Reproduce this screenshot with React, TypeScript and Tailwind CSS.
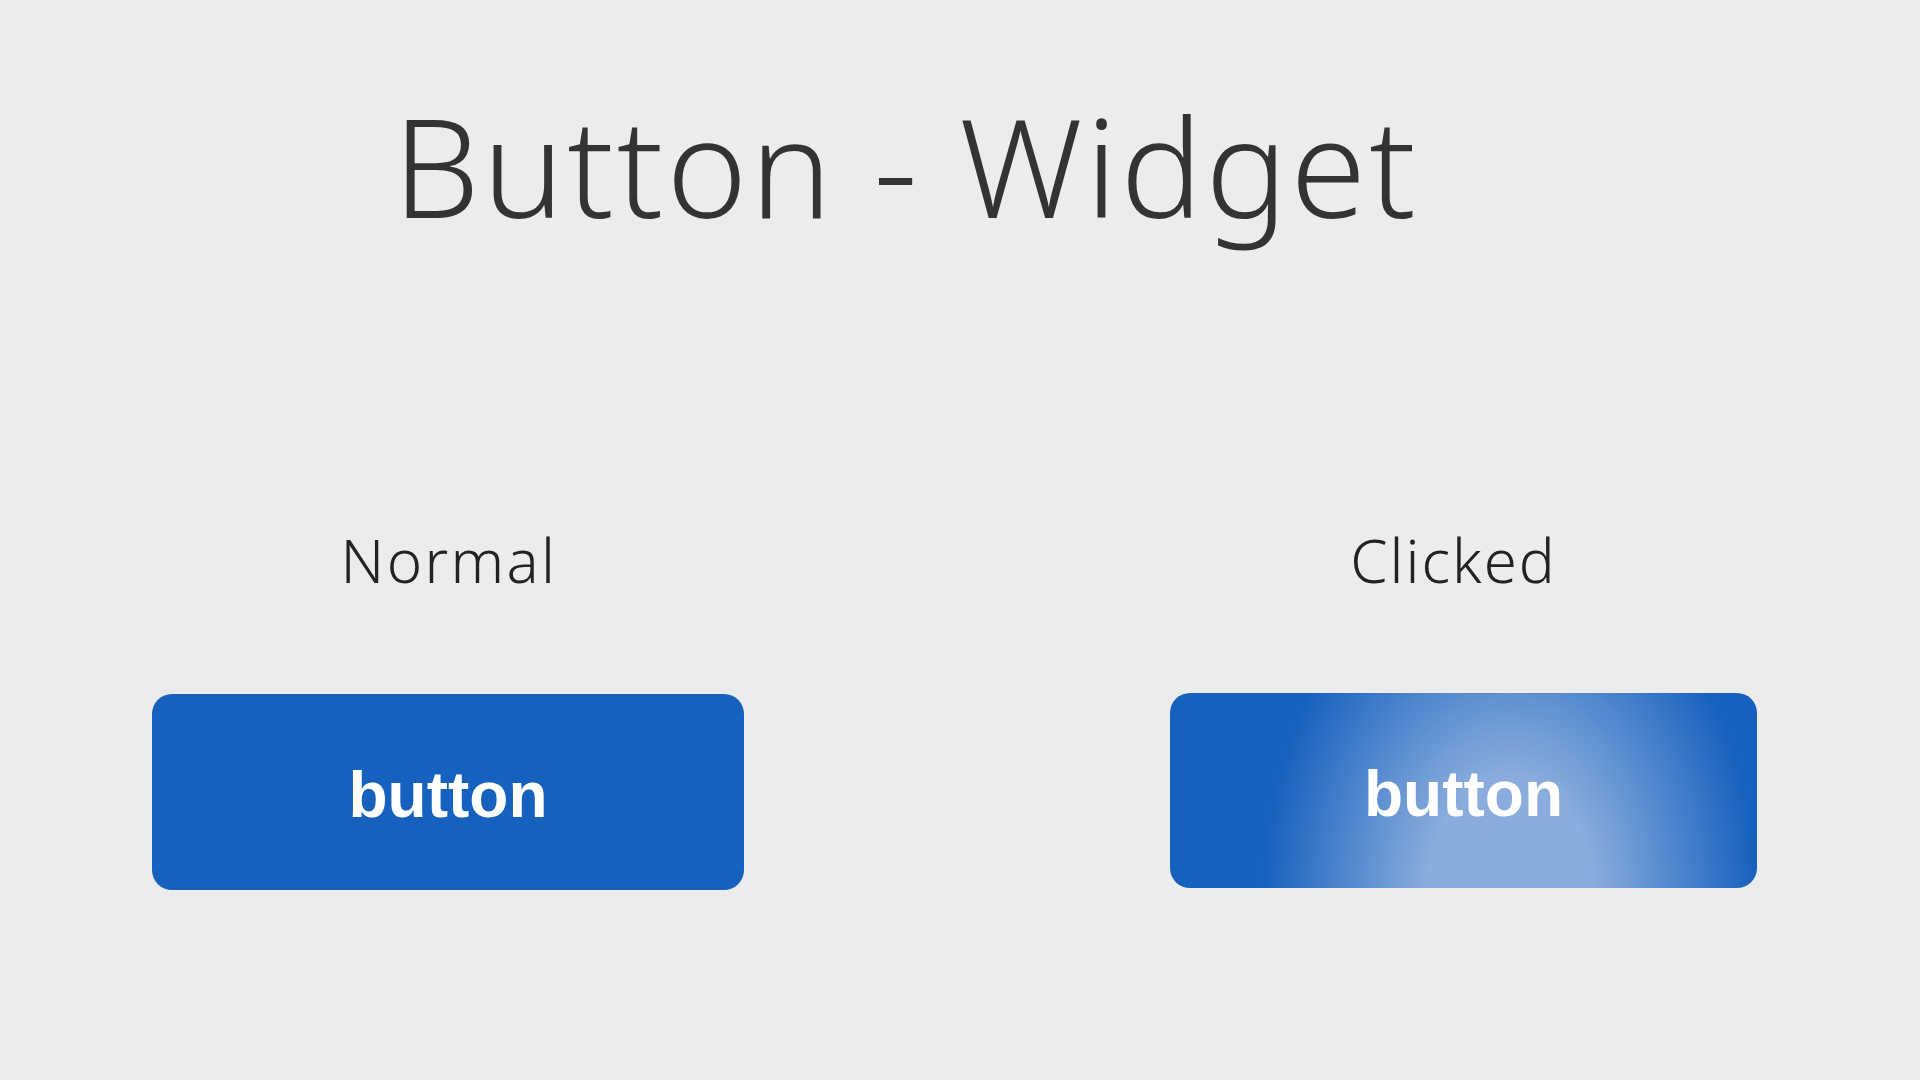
export default function App() {
  return (
    <div className="w-[1920px] h-[1080px] bg-[#ececec] flex flex-col overflow-hidden" style={{ fontFamily: '"Noto Sans", Lato, sans-serif' }}>
      <div className="pt-[97px] pl-[393px]">
        <h1 className="text-[137px] leading-none font-light text-[#333333] tracking-[3px]">
          Button - Widget
        </h1>
      </div>
      <div className="flex pl-[152px] mt-[296px]">
        <div className="w-[592px] flex flex-col items-center">
          <div className="text-[60px] leading-none font-light text-[#222222] h-[60px] tracking-[2.4px] pl-[2px]">Normal</div>
          <div className="mt-[104px] w-[592px] h-[196px] rounded-[20px] bg-[#1660be] flex items-center justify-center pt-[6px]">
            <span className="text-white font-bold text-[64px] leading-none" style={{ fontFamily: '"Liberation Sans", Arial, sans-serif' }}>button</span>
          </div>
        </div>
        <div className="ml-[426px] w-[587px] flex flex-col items-center">
          <div className="text-[60px] leading-none font-light text-[#222222] h-[60px] pr-[20px] tracking-[2px]">Clicked</div>
          <div className="mt-[103px] w-[587px] h-[195px] rounded-[20px] bg-[radial-gradient(ellipse_258px_360px_at_340px_200px,#8aaddd_0%,#8aaddd_32%,#1660be_96%)] flex items-center justify-center pt-[6px]">
            <span className="text-white font-bold text-[64px] leading-none" style={{ fontFamily: '"Liberation Sans", Arial, sans-serif' }}>button</span>
          </div>
        </div>
      </div>
    </div>
  );
}
